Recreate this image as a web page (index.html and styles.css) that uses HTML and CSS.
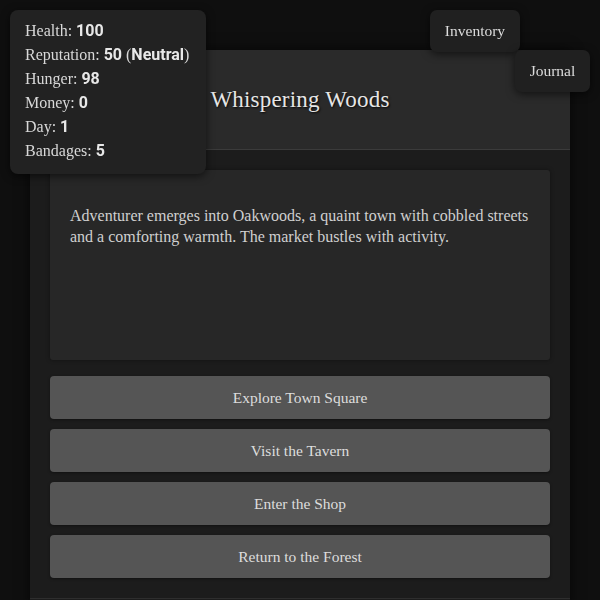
FILE: index.html
```html
<!DOCTYPE html>
<html lang="en">
<head>
<meta charset="utf-8">
<title>Whispering Woods</title>
<link rel="stylesheet" href="styles.css">
</head>
<body>
<div class="stats">
  <div class="stat">Health: <b>100</b></div>
  <div class="stat">Reputation: <b>50</b> (<b>Neutral</b>)</div>
  <div class="stat">Hunger: <b>98</b></div>
  <div class="stat">Money: <b>0</b></div>
  <div class="stat">Day: <b>1</b></div>
  <div class="stat">Bandages: <b>5</b></div>
</div>
<button class="float-btn inventory">Inventory</button>
<button class="float-btn journal">Journal</button>
<main class="game">
  <header class="game-header">
    <h1 class="title">Whispering Woods</h1>
  </header>
  <section class="game-body">
    <div class="story">
      <p>Adventurer emerges into Oakwoods, a quaint town with cobbled streets and a comforting warmth. The market bustles with activity.</p>
    </div>
    <div class="choices">
      <button class="choice">Explore Town Square</button>
      <button class="choice">Visit the Tavern</button>
      <button class="choice">Enter the Shop</button>
      <button class="choice">Return to the Forest</button>
    </div>
  </section>
  <footer class="game-footer"></footer>
</main>
</body>
</html>
```
FILE: styles.css
```css
html, body {
  margin: 0;
  padding: 0;
}
body {
  background: #0f0f0f;
  font-family: "Liberation Serif", "DejaVu Serif", serif;
  color: #d8d8d8;
  padding-top: 50px;
}
.game {
  width: 540px;
  margin: 0 auto;
  background: #1c1c1c;
  box-shadow: 0 0 12px rgba(0,0,0,0.6);
}
.game-header {
  height: 99px;
  background: #2a2a2a;
  border-bottom: 1px solid #3b3b3b;
  display: flex;
  align-items: center;
  justify-content: center;
}
.title {
  margin: 0;
  font-weight: normal;
  font-size: 23px;
  color: #e6e6e6;
  text-shadow: 1px 1px 2px rgba(0,0,0,0.8);
  letter-spacing: 0.2px;
}
.game-body {
  padding: 20px 20px 20px;
}
.story {
  background: #272727;
  border-radius: 3px;
  padding: 0 20px;
  height: 190px;
  box-sizing: border-box;
  box-shadow: 0 0 4px rgba(0,0,0,0.4);
}
.story p {
  margin: 0;
  padding-top: 35px;
  font-size: 16px;
  line-height: 21px;
  color: #d0d0d0;
}
.choices {
  margin-top: 16px;
  display: flex;
  flex-direction: column;
  gap: 10px;
}
.choice {
  height: 43px;
  background: #555555;
  border: none;
  border-radius: 4px;
  color: #dddddd;
  font-family: "Liberation Serif", "DejaVu Serif", serif;
  font-size: 15.5px;
  box-shadow: 0 1px 3px rgba(0,0,0,0.4);
}
.game-footer {
  height: 10px;
  background: #1c1c1c;
  border-top: 1px solid #2e2e2e;
}
.stats {
  position: fixed;
  top: 10px;
  left: 10px;
  width: 166px;
  padding: 9px 15px 11px;
  background: #222222;
  border-radius: 8px;
  box-shadow: 0 2px 8px rgba(0,0,0,0.6);
  z-index: 5;
}
.stat {
  font-size: 16px;
  line-height: 24px;
  color: #d8d8d8;
  white-space: nowrap;
}
.stat b {
  font-family: Roboto, "Liberation Sans", sans-serif;
  font-weight: bold;
  color: #e8e8e8;
}
.float-btn {
  position: fixed;
  height: 42px;
  padding: 0 10px;
  background: #202020;
  border: none;
  border-radius: 7px;
  color: #dcdcdc;
  font-family: "Liberation Serif", "DejaVu Serif", serif;
  font-size: 15.5px;
  box-shadow: 0 2px 8px rgba(0,0,0,0.6);
  z-index: 5;
}
.inventory {
  top: 10px;
  left: 430px;
  width: 90px;
}
.journal {
  top: 50px;
  left: 515px;
  width: 75px;
}
```
